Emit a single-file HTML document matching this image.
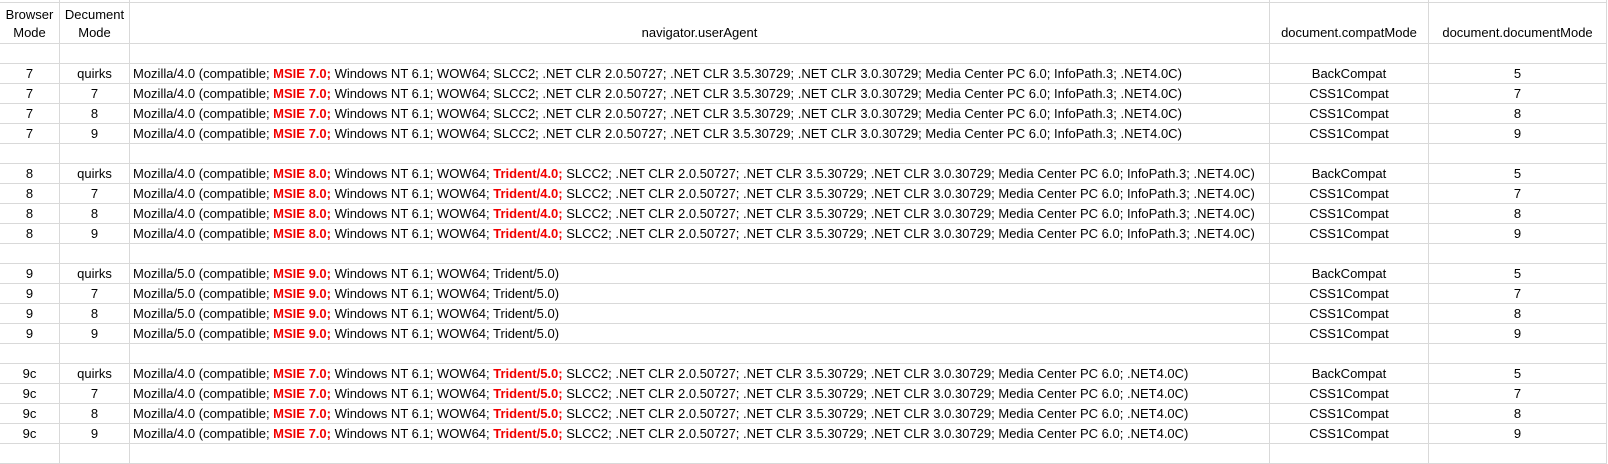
<!DOCTYPE html>
<html><head><meta charset="utf-8"><style>
html,body{margin:0;padding:0;background:#fff;width:1608px;height:447px;overflow:hidden}
table{border-collapse:collapse;table-layout:fixed;font-family:"Liberation Sans",sans-serif;font-size:13px;color:#000;position:absolute;left:-1px;top:-18px}
td{border:1px solid #d9d9d9;padding:0 3px;height:19px;line-height:19px;white-space:nowrap;overflow:hidden;vertical-align:bottom;text-align:center}
td.l{text-align:left}
tr.h td{height:39px;line-height:18px;padding-bottom:1px}
b{color:#f00000}
</style></head><body>
<table>
<col style="width:60px"><col style="width:70px"><col style="width:1140px"><col style="width:159px"><col style="width:178px">
<tr><td></td><td></td><td></td><td></td><td></td></tr>
<tr class="h"><td>Browser<br>Mode</td><td>Decument<br>Mode</td><td>navigator.userAgent</td><td>document.compatMode</td><td>document.documentMode</td></tr>
<tr><td></td><td></td><td></td><td></td><td></td></tr>
<tr><td>7</td><td>quirks</td><td class="l">Mozilla/4.0 (compatible; <b>MSIE 7.0;</b> Windows NT 6.1; WOW64; SLCC2; .NET CLR 2.0.50727; .NET CLR 3.5.30729; .NET CLR 3.0.30729; Media Center PC 6.0; InfoPath.3; .NET4.0C)</td><td>BackCompat</td><td>5</td></tr>
<tr><td>7</td><td>7</td><td class="l">Mozilla/4.0 (compatible; <b>MSIE 7.0;</b> Windows NT 6.1; WOW64; SLCC2; .NET CLR 2.0.50727; .NET CLR 3.5.30729; .NET CLR 3.0.30729; Media Center PC 6.0; InfoPath.3; .NET4.0C)</td><td>CSS1Compat</td><td>7</td></tr>
<tr><td>7</td><td>8</td><td class="l">Mozilla/4.0 (compatible; <b>MSIE 7.0;</b> Windows NT 6.1; WOW64; SLCC2; .NET CLR 2.0.50727; .NET CLR 3.5.30729; .NET CLR 3.0.30729; Media Center PC 6.0; InfoPath.3; .NET4.0C)</td><td>CSS1Compat</td><td>8</td></tr>
<tr><td>7</td><td>9</td><td class="l">Mozilla/4.0 (compatible; <b>MSIE 7.0;</b> Windows NT 6.1; WOW64; SLCC2; .NET CLR 2.0.50727; .NET CLR 3.5.30729; .NET CLR 3.0.30729; Media Center PC 6.0; InfoPath.3; .NET4.0C)</td><td>CSS1Compat</td><td>9</td></tr>
<tr><td></td><td></td><td></td><td></td><td></td></tr>
<tr><td>8</td><td>quirks</td><td class="l">Mozilla/4.0 (compatible; <b>MSIE 8.0;</b> Windows NT 6.1; WOW64; <b>Trident/4.0;</b> SLCC2; .NET CLR 2.0.50727; .NET CLR 3.5.30729; .NET CLR 3.0.30729; Media Center PC 6.0; InfoPath.3; .NET4.0C)</td><td>BackCompat</td><td>5</td></tr>
<tr><td>8</td><td>7</td><td class="l">Mozilla/4.0 (compatible; <b>MSIE 8.0;</b> Windows NT 6.1; WOW64; <b>Trident/4.0;</b> SLCC2; .NET CLR 2.0.50727; .NET CLR 3.5.30729; .NET CLR 3.0.30729; Media Center PC 6.0; InfoPath.3; .NET4.0C)</td><td>CSS1Compat</td><td>7</td></tr>
<tr><td>8</td><td>8</td><td class="l">Mozilla/4.0 (compatible; <b>MSIE 8.0;</b> Windows NT 6.1; WOW64; <b>Trident/4.0;</b> SLCC2; .NET CLR 2.0.50727; .NET CLR 3.5.30729; .NET CLR 3.0.30729; Media Center PC 6.0; InfoPath.3; .NET4.0C)</td><td>CSS1Compat</td><td>8</td></tr>
<tr><td>8</td><td>9</td><td class="l">Mozilla/4.0 (compatible; <b>MSIE 8.0;</b> Windows NT 6.1; WOW64; <b>Trident/4.0;</b> SLCC2; .NET CLR 2.0.50727; .NET CLR 3.5.30729; .NET CLR 3.0.30729; Media Center PC 6.0; InfoPath.3; .NET4.0C)</td><td>CSS1Compat</td><td>9</td></tr>
<tr><td></td><td></td><td></td><td></td><td></td></tr>
<tr><td>9</td><td>quirks</td><td class="l">Mozilla/5.0 (compatible; <b>MSIE 9.0;</b> Windows NT 6.1; WOW64; Trident/5.0)</td><td>BackCompat</td><td>5</td></tr>
<tr><td>9</td><td>7</td><td class="l">Mozilla/5.0 (compatible; <b>MSIE 9.0;</b> Windows NT 6.1; WOW64; Trident/5.0)</td><td>CSS1Compat</td><td>7</td></tr>
<tr><td>9</td><td>8</td><td class="l">Mozilla/5.0 (compatible; <b>MSIE 9.0;</b> Windows NT 6.1; WOW64; Trident/5.0)</td><td>CSS1Compat</td><td>8</td></tr>
<tr><td>9</td><td>9</td><td class="l">Mozilla/5.0 (compatible; <b>MSIE 9.0;</b> Windows NT 6.1; WOW64; Trident/5.0)</td><td>CSS1Compat</td><td>9</td></tr>
<tr><td></td><td></td><td></td><td></td><td></td></tr>
<tr><td>9c</td><td>quirks</td><td class="l">Mozilla/4.0 (compatible; <b>MSIE 7.0;</b> Windows NT 6.1; WOW64; <b>Trident/5.0;</b> SLCC2; .NET CLR 2.0.50727; .NET CLR 3.5.30729; .NET CLR 3.0.30729; Media Center PC 6.0; .NET4.0C)</td><td>BackCompat</td><td>5</td></tr>
<tr><td>9c</td><td>7</td><td class="l">Mozilla/4.0 (compatible; <b>MSIE 7.0;</b> Windows NT 6.1; WOW64; <b>Trident/5.0;</b> SLCC2; .NET CLR 2.0.50727; .NET CLR 3.5.30729; .NET CLR 3.0.30729; Media Center PC 6.0; .NET4.0C)</td><td>CSS1Compat</td><td>7</td></tr>
<tr><td>9c</td><td>8</td><td class="l">Mozilla/4.0 (compatible; <b>MSIE 7.0;</b> Windows NT 6.1; WOW64; <b>Trident/5.0;</b> SLCC2; .NET CLR 2.0.50727; .NET CLR 3.5.30729; .NET CLR 3.0.30729; Media Center PC 6.0; .NET4.0C)</td><td>CSS1Compat</td><td>8</td></tr>
<tr><td>9c</td><td>9</td><td class="l">Mozilla/4.0 (compatible; <b>MSIE 7.0;</b> Windows NT 6.1; WOW64; <b>Trident/5.0;</b> SLCC2; .NET CLR 2.0.50727; .NET CLR 3.5.30729; .NET CLR 3.0.30729; Media Center PC 6.0; .NET4.0C)</td><td>CSS1Compat</td><td>9</td></tr>
<tr><td></td><td></td><td></td><td></td><td></td></tr>
</table>
</body></html>
